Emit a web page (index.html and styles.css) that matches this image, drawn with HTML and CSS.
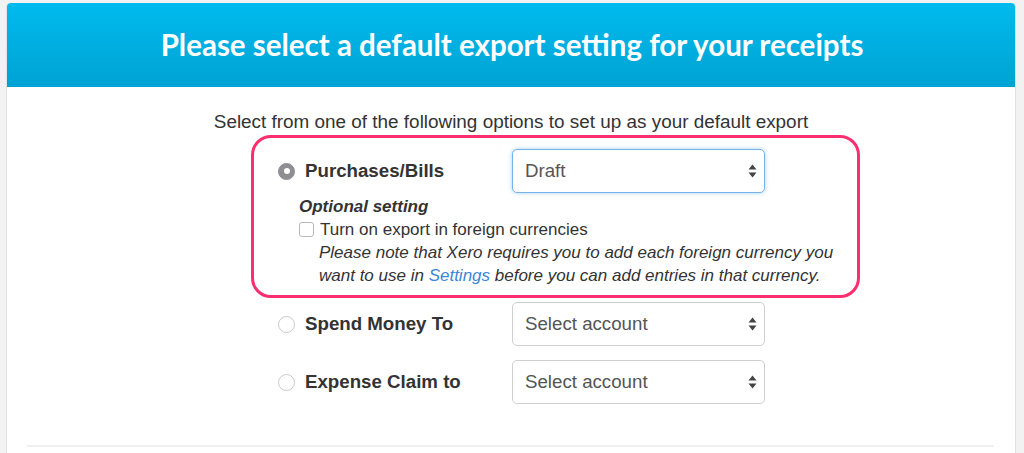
FILE: index.html
```html
<!DOCTYPE html>
<html>
<head>
<meta charset="utf-8">
<link rel="stylesheet" href="styles.css">
</head>
<body>
<div class="panel">
  <div class="header"><h1 class="title">Please select a default export setting for your receipts</h1></div>
  <div class="content">
    <p class="intro">Select from one of the following options to set up as your default export</p>
    <div class="options">
      <div class="highlight">
        <div class="row">
          <div class="label"><span class="radio checked"></span><span class="label-text">Purchases/Bills</span></div>
          <div class="select focus"><span>Draft</span>
            <svg class="arrows" width="9" height="14" viewBox="0 0 9 14"><path d="M4.5 0.5 L8.5 5.5 L0.5 5.5 Z M0.5 8.5 L8.5 8.5 L4.5 13.5 Z" fill="#444"/></svg>
          </div>
        </div>
        <div class="optional">
          <div class="opt-title">Optional setting</div>
          <div class="check-row"><span class="checkbox"></span><span>Turn on export in foreign currencies</span></div>
          <div class="note">Please note that Xero requires you to add each foreign currency you<br>want to use in <a class="link">Settings</a> before you can add entries in that currency.</div>
        </div>
      </div>
      <div class="row plain first">
        <div class="label"><span class="radio"></span><span class="label-text">Spend Money To</span></div>
        <div class="select"><span>Select account</span>
          <svg class="arrows" width="9" height="14" viewBox="0 0 9 14"><path d="M4.5 0.5 L8.5 5.5 L0.5 5.5 Z M0.5 8.5 L8.5 8.5 L4.5 13.5 Z" fill="#444"/></svg>
        </div>
      </div>
      <div class="row plain">
        <div class="label"><span class="radio"></span><span class="label-text">Expense Claim to</span></div>
        <div class="select"><span>Select account</span>
          <svg class="arrows" width="9" height="14" viewBox="0 0 9 14"><path d="M4.5 0.5 L8.5 5.5 L0.5 5.5 Z M0.5 8.5 L8.5 8.5 L4.5 13.5 Z" fill="#444"/></svg>
        </div>
      </div>
    </div>
    <div class="divider"></div>
  </div>
</div>
</body>
</html>
```
FILE: styles.css
```css
html, body { margin: 0; padding: 0; }
body {
  background: #f2f2f2;
  font-family: "Liberation Sans", Arial, sans-serif;
  color: #333;
  height: 453px;
  overflow: hidden;
}
.panel {
  margin: 3px 0 0 6px;
  width: 1008px;
  border: 1px solid #e2e2e2;
  border-top: none;
  background: #fff;
  height: 460px;
  border-radius: 4px 4px 0 0;
}
.header {
  height: 84px;
  background: linear-gradient(#00baee, #00a3d3);
  border-radius: 4px 4px 0 0;
  display: flex;
  align-items: center;
  justify-content: center;
}
.title {
  margin: 0;
  color: #fff;
  font-family: Lato, "Open Sans", sans-serif;
  font-weight: 700;
  font-size: 29.5px;
  padding-left: 2px;
  padding-bottom: 2px;
}
.content { padding: 0 20px; }
.intro {
  margin: 24px 0 0;
  text-align: center;
  font-size: 18.9px;
  line-height: 22px;
  color: #333;
}
.options {
  margin-left: 224px;
  width: 609px;
  margin-top: 2px;
}
.highlight {
  border: 3px solid #fb2f6f;
  border-radius: 20px;
  padding: 11px 0 8px 24px;
}
.row { display: flex; align-items: center; }
.label { width: 234px; display: flex; align-items: center; }
.radio {
  width: 15px; height: 15px;
  border: 1px solid #c9c9c9;
  border-radius: 50%;
  background: #fff;
  box-sizing: content-box;
  display: inline-flex;
  align-items: center;
  justify-content: center;
  flex: none;
}
.radio.checked { background: #8e8e93; border-color: #8e8e93; }
.radio.checked::after {
  content: ""; width: 6px; height: 6px; border-radius: 50%; background: #fff;
}
.label-text {
  margin-left: 10px;
  font-weight: 700;
  font-size: 18.7px;
  color: #333;
}
.select {
  width: 253px; height: 44px;
  box-sizing: border-box;
  border: 1px solid #cfcfcf;
  border-radius: 5px;
  display: flex; align-items: center; justify-content: space-between;
  padding: 0 7px 0 12px;
  font-size: 18.7px;
  color: #555;
  background: #fff;
}
.select.focus {
  border-color: #76b3ea;
  box-shadow: 0 0 4px rgba(102,175,233,.6);
}
.optional { margin-left: 21px; margin-top: 2px; font-size: 17px; line-height: 23px; }
.opt-title { font-weight: 700; font-style: italic; }
.check-row { display: flex; align-items: center; }
.checkbox {
  width: 13px; height: 13px;
  border: 1px solid #b8b8b8; border-radius: 3px;
  margin-right: 6px; background: #fff; flex: none;
}
.note { margin-left: 20px; font-style: italic; }
.link { color: #3a87d4; }
.plain { padding-left: 27px; }
.plain.first { margin-top: 4px; }
.plain + .plain { margin-top: 14px; }
.divider {
  margin-top: 41px;
  height: 2px;
  background: #f0f0f0;
  width: 967px;
}
```
